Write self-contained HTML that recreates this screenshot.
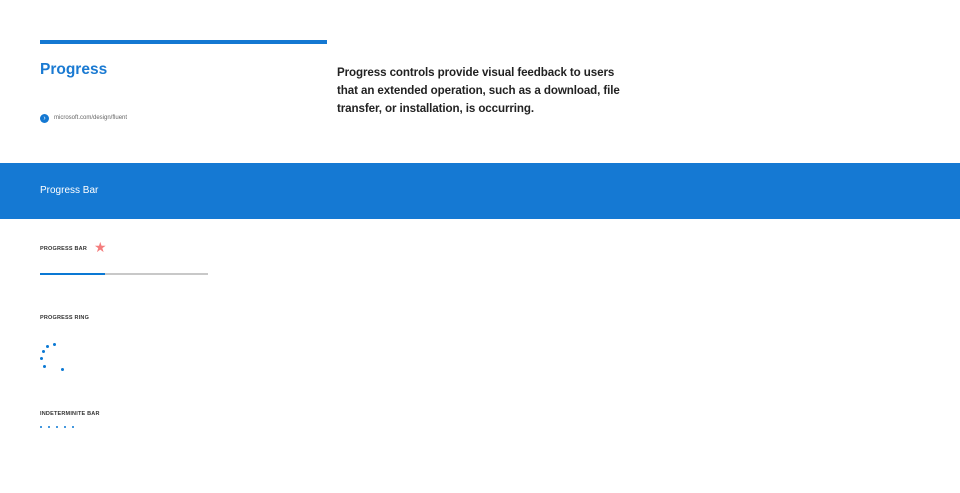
<!DOCTYPE html>
<html><head><style>
body{margin:0;width:960px;height:493px;background:#fff;position:relative;font-family:"Liberation Sans",sans-serif;overflow:hidden}
.a{position:absolute}
.lbl{font-size:5.5px;font-weight:bold;color:#333;letter-spacing:.2px}
.d{position:absolute;width:3px;height:3px;border-radius:50%;background:#0a78d4}
</style></head><body>
<div class="a" style="left:40px;top:40px;width:287px;height:4px;background:#1478d2"></div>
<div class="a" style="left:40px;top:61px;font-size:15.5px;font-weight:bold;color:#1a7ad2">Progress</div>
<div class="a" style="left:40px;top:114px;width:9px;height:9px;border-radius:50%;background:#1478d2;color:#fff;font-size:7px;line-height:9px;text-align:center">›</div>
<div class="a" style="left:54px;top:115px;font-size:6px;color:#666">microsoft.com/design/fluent</div>
<div class="a" style="left:337px;top:64px;width:320px;font-size:11.6px;line-height:18px;font-weight:bold;color:#222;white-space:nowrap;letter-spacing:-0.1px">Progress controls provide visual feedback to users<br>that an extended operation, such as a download, file<br>transfer, or installation, is occurring.</div>
<div class="a" style="left:0;top:163px;width:960px;height:56px;background:#1579d3"></div>
<div class="a" style="left:40px;top:185px;font-size:10px;color:#fff">Progress Bar</div>
<div class="a lbl" style="left:40px;top:246px">PROGRESS BAR</div>
<div class="a" style="left:94px;top:239px;font-size:14px;color:#f47d7d">★</div>
<div class="a" style="left:40px;top:273px;width:168px;height:2px;background:#c8c8c8"></div>
<div class="a" style="left:40px;top:273px;width:65px;height:2px;background:#0a78d4"></div>
<div class="a lbl" style="left:40px;top:315px">PROGRESS RING</div>
<div class="d" style="left:53px;top:343px"></div>
<div class="d" style="left:46px;top:345px"></div>
<div class="d" style="left:42px;top:350px"></div>
<div class="d" style="left:40px;top:357px"></div>
<div class="d" style="left:43px;top:365px"></div>
<div class="d" style="left:61px;top:368px"></div>
<div class="a lbl" style="left:40px;top:411px">INDETERMINITE BAR</div>
<div class="d" style="left:40px;top:426px;width:2px;height:2px"></div>
<div class="d" style="left:48px;top:426px;width:2px;height:2px"></div>
<div class="d" style="left:56px;top:426px;width:2px;height:2px"></div>
<div class="d" style="left:64px;top:426px;width:2px;height:2px"></div>
<div class="d" style="left:72px;top:426px;width:2px;height:2px"></div>
</body></html>
